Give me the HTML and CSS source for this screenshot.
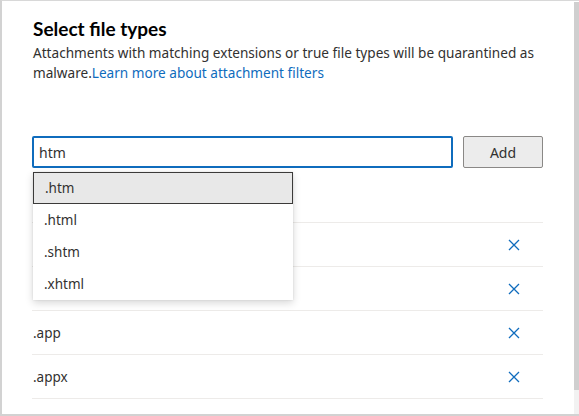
FILE: index.html
```html
<!DOCTYPE html>
<html lang="en">
<head>
    <meta charset="UTF-8">
    <title>Select file types</title>
    <link rel="stylesheet" href="styles.css">
</head>
<body>
    <div class="panel">
        <div class="content">
            <h1 class="title">Select file types</h1>
            <p class="desc">Attachments with matching extensions or true file types will be quarantined as malware.<a href="#">Learn more about attachment filters</a></p>

            <div class="add-row">
                <div class="picker">
                    <input class="picker-input" type="text" value="htm">
                    <ul class="suggestions">
                        <li class="active">.htm</li>
                        <li>.html</li>
                        <li>.shtm</li>
                        <li>.xhtml</li>
                    </ul>
                </div>
                <button class="add-btn">Add</button>
            </div>

            <ul class="types">
                <li><span>.ace</span><button class="remove" aria-label="Remove .ace"><svg viewBox="0 0 12 12"><path d="M1 1L11 11M11 1L1 11"/></svg></button></li>
                <li><span>.ani</span><button class="remove" aria-label="Remove .ani"><svg viewBox="0 0 12 12"><path d="M1 1L11 11M11 1L1 11"/></svg></button></li>
                <li><span>.app</span><button class="remove" aria-label="Remove .app"><svg viewBox="0 0 12 12"><path d="M1 1L11 11M11 1L1 11"/></svg></button></li>
                <li><span>.appx</span><button class="remove" aria-label="Remove .appx"><svg viewBox="0 0 12 12"><path d="M1 1L11 11M11 1L1 11"/></svg></button></li>
                <li><span>.arj</span><button class="remove" aria-label="Remove .arj"><svg viewBox="0 0 12 12"><path d="M1 1L11 11M11 1L1 11"/></svg></button></li>
            </ul>
        </div>
        <div class="scrollbar"><div class="thumb"></div></div>
    </div>
</body>
</html>
```

FILE: styles.css
```css
/* panel frame */
body {
    margin: 0;
    font-family: "Segoe UI", "Noto Sans", sans-serif;
    color: #323130;
    background: #fff;
}

.panel {
    width: 579px;
    height: 416px;
    box-sizing: border-box;
    border-top: 1px solid #d8d8d8;
    border-left: 2px solid #d2d2d2;
    border-bottom: 2px solid #d2d2d2;
    display: flex;
    overflow: hidden;
}

.content {
    flex: 1;
    padding: 14px 0 0 30px;
    overflow: hidden;
}

/* scrollbar on the right */
.scrollbar {
    width: 5px;
    margin-top: 1px;
    background: #f2f2f2;
    display: flex;
    flex-direction: column;
}
.thumb {
    height: 388px;
    background: #cfcfcf;
}

/* header */
.title {
    margin: 0 0 0 1px;
    font-family: "Segoe UI", Lato, sans-serif;
    font-size: 19px;
    font-weight: 700;
    line-height: 28px;
    color: #000;
}
.desc {
    margin: 0 0 0 1px;
    width: 512px;
    font-size: 13.6px;
    line-height: 20px;
    color: #323130;
}
.desc a {
    color: #0f6cbd;
    text-decoration: none;
}

/* input + add button */
.add-row {
    display: flex;
    gap: 10px;
    margin-top: 53px;
    width: 511px;
}
.picker {
    position: relative;
    flex: 1;
}
.picker-input {
    width: 100%;
    height: 32px;
    box-sizing: border-box;
    border: 2px solid #0f6cbd;
    border-radius: 2px;
    padding: 0 5px;
    font: 14px "Segoe UI", "Noto Sans", sans-serif;
    color: #323130;
    outline: none;
}
.add-btn {
    width: 80px;
    height: 32px;
    border: 1px solid #8a8886;
    border-radius: 2px;
    background: #ececec;
    font: 14px "Segoe UI", "Noto Sans", sans-serif;
    color: #323130;
}

/* suggestion dropdown, floats over the list */
.suggestions {
    position: absolute;
    top: 36px;
    left: 1px;
    width: 260px;
    margin: 0;
    padding: 0;
    list-style: none;
    background: #fff;
    box-shadow: 0 3px 8px rgba(0, 0, 0, 0.16), 0 0 2px rgba(0, 0, 0, 0.1);
    z-index: 2;
}
.suggestions li {
    height: 32px;
    box-sizing: border-box;
    padding: 0 11px;
    display: flex;
    align-items: center;
    font-size: 13.5px;
    color: #323130;
}
.suggestions .active {
    background: #e8e8e8;
    border: 1px solid #3b3a39;
}

/* selected file types */
.types {
    margin: 54px 0 0;
    padding: 0;
    list-style: none;
    width: 511px;
}
.types li {
    height: 44px;
    box-sizing: border-box;
    border-top: 1px solid #edebe9;
    display: flex;
    align-items: center;
    justify-content: space-between;
    font-size: 13.5px;
    padding-left: 1px;
}
.remove {
    width: 32px;
    height: 32px;
    margin-right: 13px;
    border: none;
    background: none;
    padding: 0;
    display: flex;
    align-items: center;
    justify-content: center;
}
.remove svg {
    width: 12px;
    height: 12px;
    stroke: #0f6cbd;
    stroke-width: 1.3;
    fill: none;
}
```
